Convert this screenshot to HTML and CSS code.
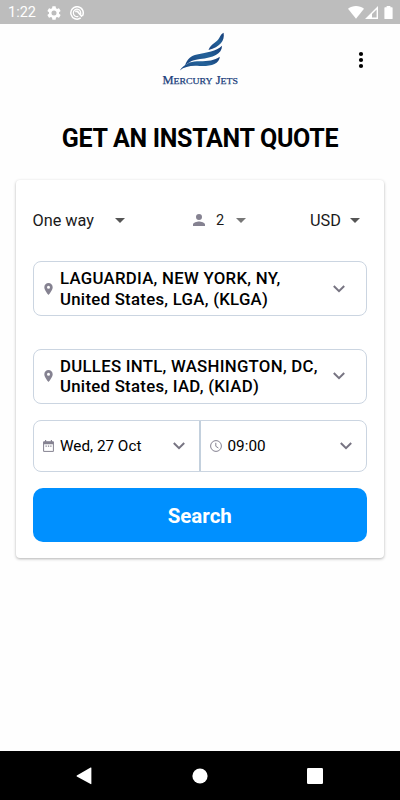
FILE: index.html
```html
<!DOCTYPE html>
<html lang="en">
<head>
  <meta charset="utf-8">
  <title>Mercury Jets</title>
  <link rel="stylesheet" href="styles.css">
</head>
<body>
  <div class="screen">
    <div class="status-bar">
      <span class="time">1:22</span>
      <svg class="gear" width="14" height="14" viewBox="2 2 20 20"><path fill="#fff" d="M19.14 12.94c.04-.3.06-.61.06-.94 0-.32-.02-.64-.07-.94l2.03-1.58a.49.49 0 0 0 .12-.61l-1.92-3.32a.49.49 0 0 0-.59-.22l-2.39.96a7 7 0 0 0-1.62-.94l-.36-2.54a.48.48 0 0 0-.48-.41h-3.84a.48.48 0 0 0-.47.41l-.36 2.54c-.59.24-1.13.57-1.62.94l-2.39-.96a.48.48 0 0 0-.59.22L2.74 8.87a.48.48 0 0 0 .12.61l2.03 1.58c-.05.3-.09.63-.09.94s.02.64.07.94l-2.03 1.58a.49.49 0 0 0-.12.61l1.92 3.32c.12.22.37.29.59.22l2.39-.96c.5.38 1.03.7 1.62.94l.36 2.54c.05.24.24.41.48.41h3.84c.24 0 .44-.17.47-.41l.36-2.54a7 7 0 0 0 1.62-.94l2.39.96c.22.08.47 0 .59-.22l1.92-3.32a.48.48 0 0 0-.12-.61zM12 15.6a3.6 3.6 0 1 1 0-7.2 3.6 3.6 0 0 1 0 7.2z"/></svg>
      <svg class="radar" width="14" height="14" viewBox="0 0 14 14" fill="none" stroke="#fff"><path stroke-width="1.5" d="M10.7 11.9A6.2 6.2 0 1 1 12.4 10"/><path stroke-width="1.3" d="M10.1 9A3.7 3.7 0 1 0 8.3 10.4"/><path stroke-width="1.6" d="M5.2 5.4h2.2l4.6 5.2"/></svg>
      <div class="signals">
        <svg width="16" height="13" viewBox="0 0 16 13"><path fill="#fff" d="M0 2.8C4.5-.9 11.500-.9 16 2.800L8 12.700z"/></svg>
        <svg width="13" height="13" viewBox="0 0 13 13"><path fill="#fff" fill-rule="evenodd" d="M13 0v13H0zM11.600 3.400L7 8v3.600h4.600z"/></svg>
        <svg width="9" height="13" viewBox="0 0 9 13"><path fill="#fff" d="M2.600 0h3.800v1.300H8q.6 0 .6.600v10.500q0 .6-.6.600H1q-.6 0-.6-.6V1.900q0-.6.600-.6h1.600z"/></svg>
      </div>
    </div>

    <div class="header">
      <svg class="logo" width="80" height="56" viewBox="160 32 80 56">
        <defs>
          <linearGradient id="wing" x1="0" y1="1" x2="1" y2="0">
            <stop offset="0" stop-color="#17427f"/>
            <stop offset=".55" stop-color="#246299"/>
            <stop offset="1" stop-color="#153a76"/>
          </linearGradient>
        </defs>
        <g fill="url(#wing)">
          <path d="M223.600 32.800C225 41 220 47 208.500 50C211 43.500 217 42.500 219.500 37.500C220.500 35.500 222 33.500 223.600 32.800z"/>
          <path d="M222 45.800C222 54 213 58 200 59C192.500 60 189 62 185 65.500C187 59.500 191 55.600 197 54.600C207 52.500 216 51.500 222 45.800z"/>
          <path d="M219.800 56.800C219.500 65 208 67 197 65.800C190 65.500 184 67 179.800 70.400C184 64.500 190 61.400 197 61.300C206 61.500 214 61 219.800 56.800z"/>
        </g>
        <text x="162.500" y="84" textLength="75.500" lengthAdjust="spacingAndGlyphs" class="logo-text">M<tspan class="small">ERCURY</tspan> J<tspan class="small">ETS</tspan></text>
      </svg>
      <svg class="more" width="6" height="18" viewBox="0 0 6 18"><circle cx="3" cy="3" r="2.100"/><circle cx="3" cy="9" r="2.100"/><circle cx="3" cy="15" r="2.100"/></svg>
    </div>

    <h1>GET AN INSTANT QUOTE</h1>

    <div class="card">
      <div class="options">
        <div class="option trip"><span>One way</span><i class="caret"></i></div>
        <div class="option people">
          <svg width="12" height="12" viewBox="4 4 16 16"><path fill="#858291" d="M12 12a4 4 0 1 0 0-8 4 4 0 0 0 0 8zm0 2c-2.670 0-8 1.340-8 4v2h16v-2c0-2.660-5.330-4-8-4z"/></svg>
          <span>2</span><i class="caret light"></i>
        </div>
        <div class="option currency"><span>USD</span><i class="caret"></i></div>
      </div>

      <div class="field airport">
        <svg class="pin" width="9" height="12" viewBox="5 2 14 20"><path fill="#858291" d="M12 2C8.130 2 5 5.130 5 9c0 5.250 7 13 7 13s7-7.750 7-13c0-3.870-3.130-7-7-7zm0 9.500a2.500 2.500 0 1 1 0-5 2.500 2.500 0 0 1 0 5z"/></svg>
        <div class="place"><div>LAGUARDIA, NEW YORK, NY,</div><div>United States, LGA, (KLGA)</div></div>
        <svg class="chevron" width="12" height="8" viewBox="0 0 12 8"><path d="M.8 1L6 6.200L11.200 1"/></svg>
      </div>

      <div class="field airport arrival">
        <svg class="pin" width="9" height="12" viewBox="5 2 14 20"><path fill="#858291" d="M12 2C8.130 2 5 5.130 5 9c0 5.250 7 13 7 13s7-7.750 7-13c0-3.870-3.130-7-7-7zm0 9.500a2.500 2.500 0 1 1 0-5 2.500 2.500 0 0 1 0 5z"/></svg>
        <div class="place"><div>DULLES INTL, WASHINGTON, DC,</div><div>United States, IAD, (KIAD)</div></div>
        <svg class="chevron" width="12" height="8" viewBox="0 0 12 8"><path d="M.8 1L6 6.200L11.200 1"/></svg>
      </div>

      <div class="field when">
        <div class="date">
          <svg width="11" height="12" viewBox="0 0 11 12"><path fill="none" stroke="#858291" d="M.6 1.900h9.800v9.500H.6z"/><path fill="#858291" d="M.5 1.400h10v2.800H.5zM2 0h1.200v2H2zM7.800 0H9v2H7.800zM2.500 5.600h1.300v1.200H2.500zM4.900 5.600h1.300v1.200H4.900zM7.200 5.600h1.300v1.200H7.200z"/></svg>
          <span>Wed, 27 Oct</span>
          <svg class="chevron" width="12" height="8" viewBox="0 0 12 8"><path d="M.8 1L6 6.200L11.200 1"/></svg>
        </div>
        <div class="hour">
          <svg width="12" height="12" viewBox="0 0 12 12" fill="none" stroke="#858291"><circle cx="6" cy="6" r="5.400"/><path d="M5.800 2.800v3.500l2.600 1.700"/></svg>
          <span>09:00</span>
          <svg class="chevron" width="12" height="8" viewBox="0 0 12 8"><path d="M.8 1L6 6.200L11.200 1"/></svg>
        </div>
      </div>

      <button class="search">Search</button>
    </div>

    <div class="nav-bar">
      <svg width="16" height="18" viewBox="0 0 16 18"><path fill="#fff" d="M14.600.6Q15.400.2 15.400 1v15.600q0 .8-.8.400L.8 9.400Q.2 9 .8 8.600z"/></svg>
      <svg width="16" height="16" viewBox="0 0 16 16"><circle cx="8" cy="8" r="7.600" fill="#fff"/></svg>
      <svg width="16" height="16" viewBox="0 0 16 16"><rect width="16" height="16" rx="1.200" fill="#fff"/></svg>
    </div>
  </div>
</body>
</html>
```
FILE: styles.css
```css
body {
  margin: 0;
  font-family: Roboto, Arial, sans-serif;
  background-color: #fefefe;
  color: #000;
}

* {
  box-sizing: border-box;
}

svg {
  display: block;
  flex: none;
}

.screen {
  display: flex;
  flex-direction: column;
  width: 400px;
  height: 800px;
  overflow: hidden;
}

.status-bar {
  display: flex;
  align-items: center;
  height: 24px;
  padding: 1px 7px 0 8px;
  background-color: #bdbdbd;
  color: #fff;
}

.time {
  width: 39px;
  font-size: 14.5px;
}

.radar {
  margin-left: 9px;
}

.signals {
  display: flex;
  align-items: center;
  margin-left: auto;
}

.signals svg + svg {
  margin-left: 1px;
}

.signals svg:last-child {
  margin-left: 6px;
}

.header {
  display: grid;
  grid-template-columns: 1fr 80px 1fr;
  align-items: center;
  height: 72px;
}

.logo {
  grid-column: 2;
}

.logo-text {
  font-family: "Liberation Serif", serif;
  font-size: 11.5px;
  fill: #1b3f7c;
  stroke: #1b3f7c;
  stroke-width: 0.25px;
}

.logo-text .small {
  font-size: 9px;
}

.more {
  justify-self: end;
  margin-right: 36px;
}

h1 {
  margin: 29px 0 0;
  font-size: 25px;
  line-height: 28px;
  font-weight: bold;
  letter-spacing: -0.3px;
  text-align: center;
}

.card {
  width: 368px;
  height: 378px;
  margin: 27px auto 0;
  padding: 28px 17px 0 16.5px;
  background-color: #fff;
  border-radius: 4px;
  box-shadow: 0 1px 3px rgba(0, 0, 0, 0.3);
}

.options {
  display: flex;
  height: 24px;
}

.option {
  display: flex;
  align-items: center;
  font-size: 16.3px;
  color: #1a1a1a;
}

.trip {
  width: 92.5px;
  justify-content: space-between;
}

.people {
  margin-left: 68px;
  font-size: 14.5px;
}

.people span {
  margin: 0 12px 0 11px;
}

.currency {
  width: 50px;
  margin: 0 7px 0 auto;
  justify-content: space-between;
}

.caret {
  border: 5px solid transparent;
  border-top-color: #555;
  border-bottom: 0;
}

.caret.light {
  border-top-color: #777;
}

.field {
  display: flex;
  align-items: center;
  border: 1px solid #cbd5e1;
  border-radius: 8px;
}

.airport {
  height: 55px;
  margin-top: 29px;
  padding: 0 21px 0 10.5px;
}

.arrival {
  margin-top: 32.5px;
}

.place {
  margin-left: 7px;
  font-size: 16.8px;
  line-height: 20.5px;
  font-weight: 500;
  letter-spacing: 0.27px;
  white-space: nowrap;
}

.chevron {
  margin-left: auto;
  fill: none;
  stroke: #777482;
  stroke-width: 2;
}

.when {
  height: 52px;
  margin-top: 16px;
  font-size: 15.3px;
}

.date,
.hour {
  display: flex;
  align-items: center;
  height: 100%;
  padding: 1px 14px 0 9.5px;
}

.date {
  width: 167.5px;
  border-right: 2px solid #c3d0dd;
}

.date span {
  margin-left: 6px;
}

.hour {
  flex: 1;
  padding-left: 9px;
}

.hour span {
  margin-left: 5.5px;
}

.search {
  display: block;
  width: 100%;
  height: 54px;
  margin-top: 16.5px;
  padding: 2px 0 0;
  border: none;
  border-radius: 10px;
  background-color: #0090ff;
  color: #fff;
  font-family: inherit;
  font-size: 20.5px;
  font-weight: bold;
}

.nav-bar {
  display: flex;
  align-items: center;
  justify-content: space-between;
  height: 49px;
  margin-top: auto;
  padding: 0 77px 0 76px;
  background-color: #000;
}
```
